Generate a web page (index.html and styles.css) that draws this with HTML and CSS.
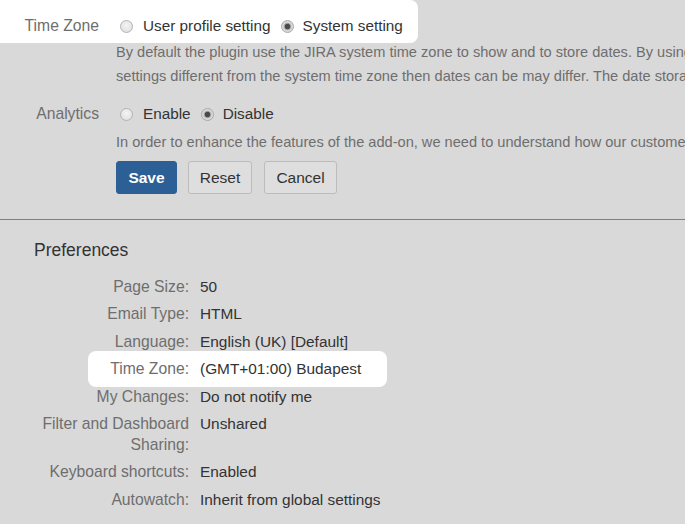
FILE: index.html
```html
<!DOCTYPE html>
<html lang="en">
<head>
<meta charset="utf-8">
<title>Settings</title>
<link rel="stylesheet" href="styles.css">
</head>
<body>
<main class="page">
  <section class="addon">
    <div class="field-row highlight-top">
      <span class="field-label">Time Zone</span>
      <div class="radio-group">
        <label class="radio"><input type="radio" name="tz"><span>User profile setting</span></label>
        <label class="radio"><input type="radio" name="tz" checked><span>System setting</span></label>
      </div>
    </div>
    <div class="desc-wrap desc-first">
      <p class="desc">By default the plugin use the JIRA system time zone to show and to store dates. By using user profile time zone<br>settings different from the system time zone then dates can be may differ. The date storage always uses the system time zone.</p>
    </div>

    <div class="field-row analytics">
      <span class="field-label">Analytics</span>
      <div class="radio-group">
        <label class="radio"><input type="radio" name="an"><span>Enable</span></label>
        <label class="radio"><input type="radio" name="an" checked><span>Disable</span></label>
      </div>
    </div>
    <div class="desc-wrap desc-second">
      <p class="desc">In order to enhance the features of the add-on, we need to understand how our customers use it.</p>
    </div>

    <div class="buttons">
      <button class="btn btn-primary" type="button">Save</button>
      <button class="btn btn-reset" type="button">Reset</button>
      <button class="btn btn-cancel" type="button">Cancel</button>
    </div>
  </section>

  <hr class="divider">

  <section class="prefs">
    <h2 class="prefs-title">Preferences</h2>
    <dl class="pref-list">
      <div class="pref-row"><dt>Page Size:</dt><dd>50</dd></div>
      <div class="pref-row"><dt>Email Type:</dt><dd>HTML</dd></div>
      <div class="pref-row"><dt>Language:</dt><dd>English (UK) [Default]</dd></div>
      <div class="pref-row pref-highlight"><dt>Time Zone:</dt><dd>(GMT+01:00) Budapest</dd></div>
      <div class="pref-row"><dt>My Changes:</dt><dd>Do not notify me</dd></div>
      <div class="pref-row"><dt>Filter and Dashboard Sharing:</dt><dd>Unshared</dd></div>
      <div class="pref-row"><dt>Keyboard shortcuts:</dt><dd>Enabled</dd></div>
      <div class="pref-row"><dt>Autowatch:</dt><dd>Inherit from global settings</dd></div>
    </dl>
  </section>
</main>
</body>
</html>
```

FILE: styles.css
```css
html, body {
  margin: 0;
  padding: 0;
  overflow: hidden;
}

body {
  background: #d9d9d9;
  font-family: "Liberation Sans", Arial, sans-serif;
  font-size: 15px;
  color: #333333;
}

.page {
  width: 685px;
}

/* ---------- add-on settings ---------- */
.field-row {
  display: flex;
  align-items: center;
}

.field-label {
  flex: none;
  width: 99px;
  text-align: right;
  font-size: 15.7px;
  color: #6e6e6e;
}

.highlight-top {
  box-sizing: border-box;
  width: 418px;
  height: 43px;
  padding-top: 9px;
  background: #ffffff;
  border-radius: 0 8px 8px 0;
}

.radio-group {
  display: flex;
  align-items: center;
  margin-left: 17px;
}

.radio {
  display: flex;
  align-items: center;
  margin-left: 4px;
  font-size: 15.3px;
  color: #333333;
}

.radio + .radio {
  margin-left: 10px;
}

.radio input {
  -webkit-appearance: none;
  appearance: none;
  box-sizing: border-box;
  width: 13px;
  height: 13px;
  margin: 0 10px 0 0;
  border: 1px solid #b3b3b3;
  border-radius: 50%;
  background: radial-gradient(circle at 50% 40%, #f4f4f4 0%, #dcdcdc 100%);
}

.radio input:checked {
  background: radial-gradient(circle, #4a4a4a 0 2.4px, #9a9a9a 3px, #d6d6d6 4.2px, #e6e6e6 100%);
  border-color: #a8a8a8;
}

.radio + .radio input {
  margin-right: 9px;
}

.desc-wrap {
  margin-left: 116px;
  overflow: hidden;
}

.desc {
  margin: 0;
  white-space: nowrap;
  font-size: 14.6px;
  line-height: 24px;
  color: #6e6e6e;
}

.desc-first {
  margin-top: -3px;
}

.analytics {
  height: 28px;
  margin-top: 12px;
}

.desc-second {
  margin-top: 2px;
}

.buttons {
  display: flex;
  gap: 11px;
  margin: 7px 0 0 116px;
}

.btn {
  box-sizing: border-box;
  height: 33px;
  padding: 0;
  font-family: inherit;
  font-size: 15.5px;
  color: #333333;
  background: #dedede;
  border: 1px solid #bcbcbc;
  border-radius: 3px;
}

.btn-primary {
  width: 61px;
  color: #ffffff;
  font-weight: bold;
  background: #2c5f95;
  border-color: #2c5f95;
}

.btn-reset {
  width: 64px;
}

.btn-cancel {
  width: 73px;
  margin-left: 1px;
}

.divider {
  margin: 25px 0 0;
  border: 0;
  height: 1px;
  background: #7f7f7f;
}

/* ---------- preferences ---------- */
.prefs-title {
  margin: 18px 0 0 34px;
  font-size: 17.5px;
  font-weight: normal;
  line-height: 24px;
  color: #333333;
}

.pref-list {
  display: flex;
  flex-direction: column;
  gap: 6.4px;
  margin: 14px 0 0 38px;
  line-height: 21px;
}

.pref-row {
  display: flex;
}

.pref-row dt {
  flex: none;
  width: 151px;
  text-align: right;
  font-size: 15.7px;
  color: #6e6e6e;
}

.pref-row dd {
  margin: 0 0 0 11px;
  font-size: 15.4px;
  color: #333333;
}

.pref-highlight {
  align-self: flex-start;
  margin: -7.5px 0 -7.5px 50px;
  padding: 7.5px 26px 7.5px 20px;
  background: #ffffff;
  border-radius: 8px;
}

.pref-highlight dt {
  width: 81px;
}
```
